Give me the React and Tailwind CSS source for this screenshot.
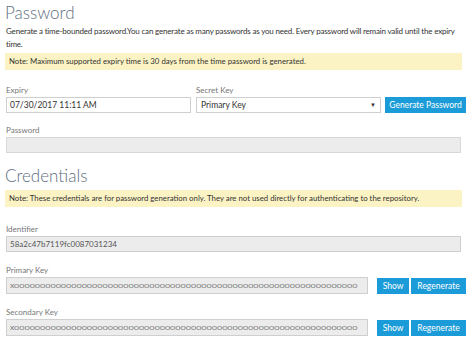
import React from 'react';

const font = { fontFamily: 'Lato, "Noto Sans", sans-serif' };

const Label = ({ children }) => (
  <div className="text-[8px] leading-[10px] text-[#777] mb-[2px]">{children}</div>
);

const Note = ({ children }) => (
  <div className="bg-[#fcf3c4] text-[7.8px] leading-[17px] text-[#333] px-[4px] h-[17px] whitespace-nowrap overflow-hidden">{children}</div>
);

const BlueButton = ({ children, className = '' }) => (
  <button className={'h-[16px] bg-[#1b9bd7] text-white text-[8.5px] leading-[16px] shrink-0 ' + className}>{children}</button>
);

const keyValue = 'X' + 'O'.repeat(66);

const KeyRow = ({ label }) => (
  <div className="mt-[13px]">
    <Label>{label}</Label>
    <div className="flex items-center">
      <div className="w-[362px] h-[17px] bg-[#ececec] border border-[#cfcfcf] text-[6.5px] leading-[15px] text-[#666] px-[3px] overflow-hidden whitespace-nowrap">
        {keyValue}
      </div>
      <BlueButton className="ml-[9px] w-[32px]">Show</BlueButton>
      <BlueButton className="ml-[2px] w-[55px]">Regenerate</BlueButton>
    </div>
  </div>
);

export default function App() {
  return (
    <div style={font} className="w-[474px] h-[343px] bg-white px-[5px] pt-[2px] overflow-hidden">
      <h1 className="text-[17px] leading-[22px] font-light text-[#5d6e7e]">Password</h1>
      <p className="text-[8px] leading-[13px] tracking-[-0.18px] text-[#333] mt-[1px] pl-[1px]">
        <span className="whitespace-nowrap">Generate a time-bounded password.You can generate as many passwords as you need. Every password will remain valid until the expiry</span>
        <br />
        time.
      </p>
      <div className="mt-[2px] mr-[7px]">
        <Note>Note: Maximum supported expiry time is 30 days from the time password is generated.</Note>
      </div>

      <div className="flex items-end mt-[15px] pl-[1px]">
        <div className="w-[185px]">
          <Label>Expiry</Label>
          <div className="h-[16px] border border-[#cfcfcf] text-[8.5px] leading-[14px] text-[#333] px-[3px]">07/30/2017 11:11 AM</div>
        </div>
        <div className="w-[185px] ml-[5px]">
          <Label>Secret Key</Label>
          <div className="h-[16px] border border-[#cfcfcf] text-[8.5px] leading-[14px] text-[#333] px-[4px] flex justify-between">
            <span>Primary Key</span>
            <span className="text-[6px]">▼</span>
          </div>
        </div>
        <BlueButton className="ml-[4px] w-[81px]">Generate Password</BlueButton>
      </div>

      <div className="mt-[12px] pl-[1px] pr-[8px]">
        <Label>Password</Label>
        <div className="h-[16px] bg-[#ececec] border border-[#d8d8d8]"></div>
      </div>

      <h2 className="text-[17px] leading-[22px] font-light text-[#5d6e7e] mt-[12px]">Credentials</h2>
      <div className="mt-[3px] mr-[7px]">
        <Note>Note: These credentials are for password generation only. They are not used directly for authenticating to the repository.</Note>
      </div>

      <div className="mt-[17px] pl-[1px] pr-[8px]">
        <Label>Identifier</Label>
        <div className="h-[16px] bg-[#ececec] border border-[#cfcfcf] text-[8px] leading-[14px] text-[#555] px-[3px]">58a2c47b7119fc0087031234</div>
      </div>

      <div className="pl-[1px]">
        <KeyRow label="Primary Key" />
        <KeyRow label="Secondary Key" />
      </div>
    </div>
  );
}
